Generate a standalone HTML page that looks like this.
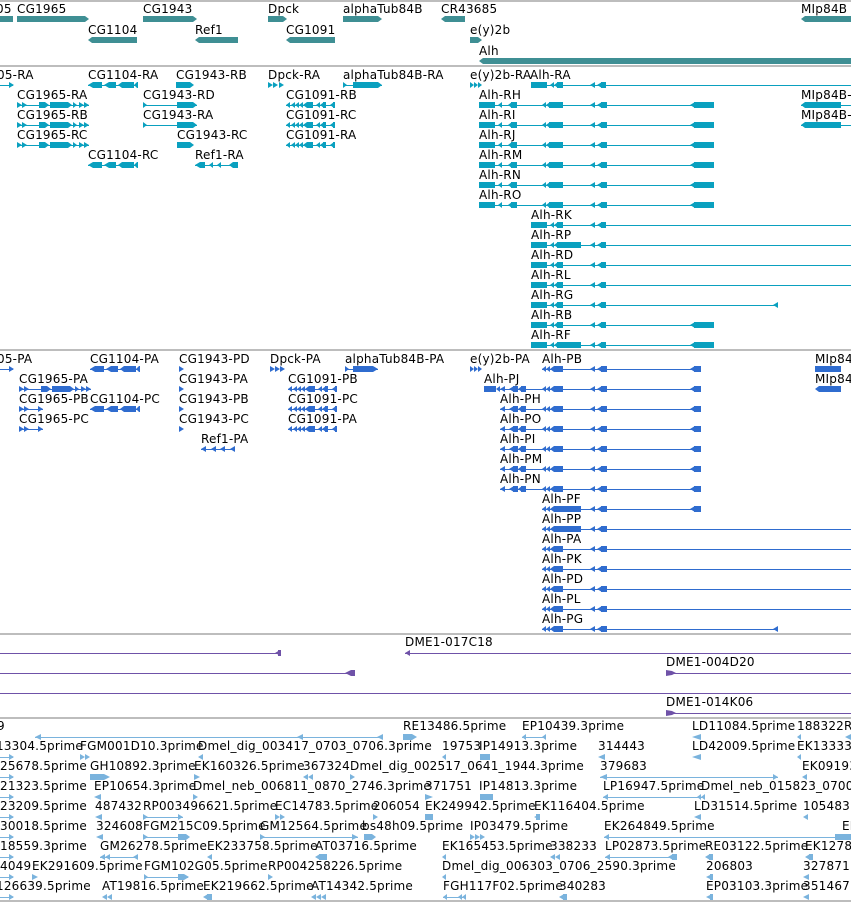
<!DOCTYPE html>
<html><head><meta charset="utf-8">
<style>
html,body{margin:0;padding:0;background:#fff;}
svg{display:block;}
text{font-family:"DejaVu Sans","Liberation Sans",sans-serif;font-size:12px;fill:#000;letter-spacing:0.2px;}
</style></head>
<body>
<svg width="851" height="902" viewBox="0 0 851 902" xmlns="http://www.w3.org/2000/svg">
<defs>
 <g id="rh"><rect x="0" y="0" width="235" height="1"/>
  <rect x="0" y="-3" width="16" height="6"/><polygon points="19,0 23,-3 23,3"/><polygon points="29,0 33,-3 33,3"/><rect x="32" y="-3" width="6" height="6"/>
  <polygon points="63,0 67,-3 67,3"/><polygon points="67,0 71,-3 71,3"/><rect x="70" y="-3" width="14" height="6"/>
  <polygon points="111,0 116,-3 116,3"/><polygon points="118,0 123,-3 123,3"/><rect x="122" y="-3" width="6" height="6"/>
  <polygon points="211,0 216,-3 216,3"/><rect x="215" y="-3" width="20" height="6"/></g>
 <g id="rkb"><rect x="0" y="-3" width="16" height="6"/><polygon points="19,0 23,-3 23,3"/><polygon points="23,0 27,-3 27,3"/><rect x="26" y="-3" width="6" height="6"/>
  <polygon points="59,0 64,-3 64,3"/><polygon points="66,0 71,-3 71,3"/><rect x="70" y="-3" width="5" height="6"/></g>
 <g id="rk"><rect x="0" y="0" width="320" height="1"/><use href="#rkb"/></g>
 <g id="rp"><use href="#rk"/><rect x="26" y="-3" width="24" height="6"/></g>
 <g id="rg"><rect x="0" y="0" width="247" height="1"/><use href="#rkb"/><polygon points="242,0 247,-3 247,3"/></g>
 <g id="rb"><rect x="0" y="0" width="183" height="1"/><use href="#rkb"/><polygon points="159,0 164,-3 164,3"/><rect x="163" y="-3" width="20" height="6"/></g>
 <g id="rf"><use href="#rb"/><rect x="26" y="-3" width="24" height="6"/></g>
 <g id="pbb"><polygon points="0,0 4,-3 4,3"/><polygon points="4,0 8,-3 8,3"/><polygon points="8,0 12,-3 12,3"/><rect x="12" y="-3" width="9" height="6"/>
  <polygon points="48,0 53,-3 53,3"/><polygon points="55,0 60,-3 60,3"/><rect x="59" y="-3" width="6" height="6"/></g>
 <g id="pb"><rect x="0" y="0" width="159" height="1"/><use href="#pbb"/><polygon points="148,0 153,-3 153,3"/><rect x="152" y="-3" width="7" height="6"/></g>
 <g id="ph"><use href="#pb" x="42"/><rect x="0" y="0" width="42" height="1"/><polygon points="0,0 5,-3 5,3"/><polygon points="9,0 14,-3 14,3"/><rect x="13" y="-3" width="5" height="6"/><polygon points="18,0 22,-3 22,3"/><rect x="21" y="-3" width="5" height="6"/></g>
 <g id="pj"><use href="#ph" x="16"/><rect x="0" y="-3" width="12" height="6"/><polygon points="12,0 16,-3 16,3"/></g>
 <g id="pf"><use href="#pb"/><rect x="12" y="-3" width="27" height="6"/></g>
 <g id="pa"><rect x="0" y="0" width="309" height="1"/><use href="#pbb"/></g>
 <g id="pp"><use href="#pa"/><rect x="12" y="-3" width="27" height="6"/></g>
 <g id="pg"><rect x="0" y="0" width="236" height="1"/><use href="#pbb"/><polygon points="231,0 236,-3 236,3"/></g>
 <g id="c1965"><rect x="0" y="0" width="72" height="1"/><polygon points="0,-3 5,0 0,3"/><polygon points="5,-3 10,0 5,3"/><rect x="22" y="-3" width="6" height="6"/><polygon points="28,-3 32,0 28,3"/><rect x="33" y="-3" width="18" height="6"/><polygon points="51,-3 55,0 51,3"/><polygon points="56,-3 60,0 56,3"/><polygon points="62,-3 67,0 62,3"/><polygon points="67,-3 72,0 67,3"/></g>
 <g id="c1091"><rect x="0" y="0" width="49" height="1"/><polygon points="0,0 4,-3 4,3"/><polygon points="5,0 9,-3 9,3"/><polygon points="9,0 13,-3 13,3"/><polygon points="13,0 17,-3 17,3"/><polygon points="17,0 21,-3 21,3"/><rect x="21" y="-3" width="6" height="6"/><polygon points="30,0 34,-3 34,3"/><polygon points="34,0 38,-3 38,3"/><rect x="37" y="-3" width="3" height="6"/><polygon points="44,0 48,-3 48,3"/><rect x="47" y="-3" width="2" height="6"/></g>
 <g id="c1104"><rect x="0" y="0" width="50" height="1"/><polygon points="0,0 5,-3 5,3"/><rect x="5" y="-3" width="9" height="6"/><polygon points="16,0 21,-3 21,3"/><rect x="21" y="-3" width="7" height="6"/><polygon points="30,0 34,-3 34,3"/><rect x="34" y="-3" width="12" height="6"/><polygon points="46,0 49,-3 49,3"/><rect x="49" y="-3" width="1" height="6"/></g>
</defs>

<g fill="#bdbdbd">
<rect x="0" y="0" width="851" height="2"/>
<rect x="0" y="65" width="851" height="2"/>
<rect x="0" y="349" width="851" height="2"/>
<rect x="0" y="633" width="851" height="2"/>
<rect x="0" y="717" width="851" height="2"/>
<rect x="0" y="900" width="851" height="2"/>
</g>

<g fill="#3f8f94">
<rect x="0" y="16" width="13" height="6"/>
<polygon points="17,16 85,16 89,19 85,22 17,22"/>
<polygon points="143,16 193,16 197,19 193,22 143,22"/>
<polygon points="268,16 283,16 287,19 283,22 268,22"/>
<polygon points="343,16 378,16 382,19 378,22 343,22"/>
<polygon points="441,19 445,16 465,16 465,22 445,22"/>
<polygon points="801,19 805,16 851,16 851,22 805,22"/>
<polygon points="88,40 92,37 137,37 137,43 92,43"/>
<polygon points="195,40 199,37 238,37 238,43 199,43"/>
<polygon points="286,40 290,37 335,37 335,43 290,43"/>
<polygon points="470,37 478,37 482,40 478,43 470,43"/>
<polygon points="479,61 483,58 851,58 851,64 483,64"/>
</g>
<text x="-4" y="13">05</text><text x="17" y="13">CG1965</text><text x="143" y="13">CG1943</text><text x="268" y="13">Dpck</text><text x="343" y="13">alphaTub84B</text><text x="441" y="13">CR43685</text><text x="801" y="13">MIp84B</text>
<text x="88" y="34">CG1104</text><text x="195" y="34">Ref1</text><text x="286" y="34">CG1091</text><text x="470" y="34">e(y)2b</text>
<text x="479" y="55">Alh</text>

<g fill="#0aa0bf">
<rect x="0" y="85" width="13" height="1"/><polygon points="9,82 14,85 9,88"/>
<use href="#c1104" x="88" y="85"/>
<rect x="176" y="82" width="14" height="6"/><polygon points="190,82 194,85 190,88"/>
<polygon points="268,82 273,85 268,88"/><polygon points="273,82 278,85 273,88"/><polygon points="279,82 284,85 279,88"/>
<rect x="343" y="85" width="39" height="1"/><polygon points="343,82 347,85 343,88"/><rect x="353" y="82" width="25" height="6"/><polygon points="378,82 382,85 378,88"/>
<polygon points="470,82 474,85 470,88"/><polygon points="474,82 478,85 474,88"/><polygon points="478,82 482,85 478,88"/>
<use href="#rk" x="531" y="85"/>
<use href="#c1965" x="17" y="105"/><use href="#c1965" x="17" y="125"/><use href="#c1965" x="17" y="145"/>
<rect x="143" y="105" width="54" height="1"/><polygon points="143,102 147,105 143,108"/><rect x="177" y="102" width="16" height="6"/><polygon points="193,102 197,105 193,108"/>
<rect x="143" y="125" width="54" height="1"/><polygon points="143,122 147,125 143,128"/><rect x="177" y="122" width="16" height="6"/><polygon points="193,122 197,125 193,128"/>
<rect x="177" y="142" width="13" height="6"/><polygon points="190,142 194,145 190,148"/>
<use href="#c1091" x="286" y="105"/><use href="#c1091" x="286" y="125"/><use href="#c1091" x="286" y="145"/>
<use href="#c1104" x="88" y="165"/>
<rect x="195" y="165" width="43" height="1"/><polygon points="195,165 200,162 200,168"/><rect x="200" y="162" width="5" height="6"/><polygon points="209,165 213,162 213,168"/><polygon points="217,165 221,162 221,168"/><polygon points="229,165 233,162 233,168"/><rect x="233" y="162" width="5" height="6"/>
<use href="#rh" x="479" y="105"/><use href="#rh" x="479" y="125"/><use href="#rh" x="479" y="145"/><use href="#rh" x="479" y="165"/><use href="#rh" x="479" y="185"/><use href="#rh" x="479" y="205"/>
<rect x="801" y="105" width="50" height="1"/><polygon points="801,105 805,102 805,108"/><rect x="805" y="102" width="36" height="6"/>
<rect x="801" y="125" width="50" height="1"/><polygon points="801,125 805,122 805,128"/><rect x="805" y="122" width="36" height="6"/>
<use href="#rk" x="531" y="225"/><use href="#rp" x="531" y="245"/><use href="#rk" x="531" y="265"/><use href="#rk" x="531" y="285"/><use href="#rg" x="531" y="305"/><use href="#rb" x="531" y="325"/><use href="#rf" x="531" y="345"/>
</g>
<text x="-3" y="79">05-RA</text><text x="88" y="79">CG1104-RA</text><text x="176" y="79">CG1943-RB</text><text x="268" y="79">Dpck-RA</text><text x="343" y="79">alphaTub84B-RA</text><text x="470" y="79">e(y)2b-RA</text><text x="530" y="79">Alh-RA</text>
<text x="17" y="99">CG1965-RA</text><text x="143" y="99">CG1943-RD</text><text x="286" y="99">CG1091-RB</text><text x="479" y="99">Alh-RH</text><text x="801" y="99">MIp84B-</text>
<text x="17" y="119">CG1965-RB</text><text x="143" y="119">CG1943-RA</text><text x="286" y="119">CG1091-RC</text><text x="479" y="119">Alh-RI</text><text x="801" y="119">MIp84B-</text>
<text x="17" y="139">CG1965-RC</text><text x="177" y="139">CG1943-RC</text><text x="286" y="139">CG1091-RA</text><text x="479" y="139">Alh-RJ</text>
<text x="88" y="159">CG1104-RC</text><text x="195" y="159">Ref1-RA</text><text x="479" y="159">Alh-RM</text>
<text x="479" y="179">Alh-RN</text><text x="479" y="199">Alh-RO</text>
<text x="531" y="219">Alh-RK</text><text x="531" y="239">Alh-RP</text><text x="531" y="259">Alh-RD</text><text x="531" y="279">Alh-RL</text><text x="531" y="299">Alh-RG</text><text x="531" y="319">Alh-RB</text><text x="531" y="339">Alh-RF</text>

<g fill="#2f6ccf">
<rect x="0" y="369" width="13" height="1"/><polygon points="9,366 14,369 9,372"/>
<use href="#c1104" x="90" y="369"/><use href="#c1104" x="90" y="409"/>
<polygon points="179,366 184,369 179,372"/><polygon points="179,386 184,389 179,392"/><polygon points="179,406 184,409 179,412"/><polygon points="179,426 184,429 179,432"/>
<polygon points="270,366 275,369 270,372"/><polygon points="275,366 280,369 275,372"/><polygon points="280,366 285,369 280,372"/>
<rect x="345" y="369" width="33" height="1"/><polygon points="345,366 349,369 345,372"/><rect x="353" y="366" width="20" height="6"/><polygon points="373,366 378,369 373,372"/>
<polygon points="470,366 474,369 470,372"/><polygon points="474,366 478,369 474,372"/><polygon points="478,366 482,369 478,372"/>
<use href="#c1965" x="19" y="389"/>
<rect x="19" y="409" width="24" height="1"/><polygon points="19,406 24,409 19,412"/><polygon points="24,406 29,409 24,412"/><polygon points="38,406 43,409 38,412"/>
<rect x="19" y="429" width="24" height="1"/><polygon points="19,426 24,429 19,432"/><polygon points="24,426 29,429 24,432"/><polygon points="38,426 43,429 38,432"/>
<use href="#c1091" x="288" y="389"/><use href="#c1091" x="288" y="409"/><use href="#c1091" x="288" y="429"/>
<rect x="201" y="449" width="34" height="1"/><polygon points="201,449 206,446 206,452"/><polygon points="211,449 216,446 216,452"/><polygon points="220,449 225,446 225,452"/><polygon points="230,449 235,446 235,452"/>
<use href="#pb" x="542" y="369"/><use href="#pj" x="484" y="389"/>
<use href="#ph" x="500" y="409"/><use href="#ph" x="500" y="429"/><use href="#ph" x="500" y="449"/><use href="#ph" x="500" y="469"/><use href="#ph" x="500" y="489"/>
<use href="#pf" x="542" y="509"/><use href="#pp" x="542" y="529"/><use href="#pa" x="542" y="549"/><use href="#pa" x="542" y="569"/><use href="#pa" x="542" y="589"/><use href="#pa" x="542" y="609"/><use href="#pg" x="542" y="629"/>
<rect x="815" y="366" width="26" height="6"/>
<polygon points="815,389 819,386 841,386 841,392 819,392"/>
</g>
<text x="-3" y="363">05-PA</text><text x="90" y="363">CG1104-PA</text><text x="179" y="363">CG1943-PD</text><text x="270" y="363">Dpck-PA</text><text x="345" y="363">alphaTub84B-PA</text><text x="470" y="363">e(y)2b-PA</text><text x="542" y="363">Alh-PB</text><text x="815" y="363">MIp84</text>
<text x="19" y="383">CG1965-PA</text><text x="179" y="383">CG1943-PA</text><text x="288" y="383">CG1091-PB</text><text x="484" y="383">Alh-PJ</text><text x="815" y="383">MIp84</text>
<text x="19" y="403">CG1965-PB</text><text x="90" y="403">CG1104-PC</text><text x="179" y="403">CG1943-PB</text><text x="288" y="403">CG1091-PC</text><text x="500" y="403">Alh-PH</text>
<text x="19" y="423">CG1965-PC</text><text x="179" y="423">CG1943-PC</text><text x="288" y="423">CG1091-PA</text><text x="500" y="423">Alh-PO</text>
<text x="201" y="443">Ref1-PA</text><text x="500" y="443">Alh-PI</text>
<text x="500" y="463">Alh-PM</text><text x="500" y="483">Alh-PN</text>
<text x="542" y="503">Alh-PF</text><text x="542" y="523">Alh-PP</text><text x="542" y="543">Alh-PA</text><text x="542" y="563">Alh-PK</text><text x="542" y="583">Alh-PD</text><text x="542" y="603">Alh-PL</text><text x="542" y="623">Alh-PG</text>

<g fill="#6f52a8">
<rect x="0" y="653" width="281" height="1"/><polygon points="275,653 280,650 281,656"/><rect x="278" y="650" width="3" height="6"/>
<rect x="405" y="653" width="446" height="1"/><polygon points="405,653 410,650 410,656"/>
<rect x="0" y="673" width="355" height="1"/><polygon points="345,673 351,670 355,670 355,676 351,676"/>
<rect x="666" y="673" width="185" height="1"/><polygon points="666,670 672,671 676,673 672,675 666,676"/>
<rect x="0" y="693" width="851" height="1"/>
<rect x="666" y="713" width="185" height="1"/><polygon points="666,710 672,711 676,713 672,715 666,716"/>
</g>
<text x="405" y="646">DME1-017C18</text>
<text x="666" y="666">DME1-004D20</text>
<text x="666" y="706">DME1-014K06</text>

<g fill="#7ab3dd">
<rect x="35" y="737" width="348" height="1"/><polygon points="35,737 41,734 41,740"/><polygon points="297,737 303,734 303,740"/><polygon points="377,737 383,734 383,740"/>
<rect x="403" y="734" width="9" height="6"/><polygon points="412,734 417,737 412,740"/>
<rect x="522" y="737" width="24" height="1"/><polygon points="522,737 526,734 526,740"/><polygon points="542,737 546,734 546,740"/>
<polygon points="692,737 701,734 701,740"/><polygon points="797,737 801,734 801,740"/><polygon points="845,737 851,734 851,740"/>
<g id="estcol"><rect x="0" y="757" width="13" height="1"/><polygon points="9,754 14,757 9,760"/></g>
<use href="#estcol" y="20"/><use href="#estcol" y="40"/><use href="#estcol" y="60"/><use href="#estcol" y="80"/><use href="#estcol" y="100"/><use href="#estcol" y="120"/><use href="#estcol" y="140"/>
<polygon points="80,754 85,757 80,760"/><polygon points="85,754 90,757 85,760"/>
<polygon points="198,757 203,754 203,760"/><polygon points="442,757 446,754 446,760"/><rect x="480" y="754" width="10" height="6"/><polygon points="480,757 484,754 484,760"/><polygon points="598,757 605,754 605,760"/><polygon points="692,757 701,754 701,760"/><polygon points="797,757 801,754 801,760"/>
<rect x="90" y="774" width="14" height="6"/><polygon points="90,777 95,774 95,780"/><polygon points="104,774 110,777 104,780"/><polygon points="194,774 200,777 194,780"/><polygon points="303,777 308,774 308,780"/><polygon points="308,777 313,774 313,780"/><polygon points="350,774 355,777 350,780"/>
<rect x="600" y="777" width="178" height="1"/><polygon points="600,777 607,774 607,780"/><polygon points="773,774 778,777 773,780"/><polygon points="802,777 807,774 807,780"/>
<polygon points="94,797 101,794 101,800"/><polygon points="193,794 198,797 193,800"/><polygon points="425,794 433,797 425,800"/><rect x="480" y="794" width="13" height="6"/><polygon points="480,797 484,794 484,800"/>
<rect x="603" y="797" width="101" height="1"/><polygon points="603,797 608,794 608,800"/><polygon points="697,797 701,794 701,800"/><polygon points="701,797 705,794 705,800"/>
<polygon points="95,817 102,814 102,820"/><rect x="143" y="817" width="40" height="1"/><polygon points="143,814 148,817 143,820"/><polygon points="178,814 183,817 178,820"/><polygon points="275,814 280,817 275,820"/><polygon points="280,814 285,817 280,820"/><polygon points="373,814 378,817 373,820"/><rect x="425" y="814" width="8" height="6"/><polygon points="534,817 540,814 540,820"/><rect x="536" y="814" width="4" height="6"/><polygon points="694,817 701,814 701,820"/><polygon points="803,817 808,814 808,820"/>
<polygon points="96,837 103,834 103,840"/><rect x="143" y="837" width="43" height="1"/><polygon points="143,834 148,837 143,840"/><rect x="178" y="834" width="8" height="6"/><polygon points="186,834 190,837 186,840"/><rect x="260" y="837" width="98" height="1"/><polygon points="260,834 265,837 260,840"/><polygon points="352,834 358,837 352,840"/><rect x="364" y="834" width="8" height="6"/><polygon points="372,834 376,837 372,840"/><polygon points="470,834 475,837 470,840"/><polygon points="475,834 480,837 475,840"/><polygon points="480,834 485,837 480,840"/>
<rect x="604" y="837" width="247" height="1"/><polygon points="604,837 609,834 609,840"/><rect x="835" y="834" width="16" height="6"/>
<rect x="100" y="857" width="38" height="1"/><polygon points="100,857 105,854 105,860"/><polygon points="105,857 110,854 110,860"/><polygon points="133,857 138,854 138,860"/><polygon points="207,857 212,854 212,860"/><polygon points="315,857 320,854 320,860"/><rect x="319" y="854" width="8" height="6"/><polygon points="442,857 446,854 446,860"/><polygon points="550,857 555,854 555,860"/><polygon points="555,857 560,854 560,860"/>
<rect x="605" y="857" width="72" height="1"/><polygon points="605,857 610,854 610,860"/><polygon points="668,857 673,854 673,860"/><rect x="672" y="854" width="5" height="6"/><polygon points="705,857 710,854 710,860"/><rect x="709" y="854" width="4" height="6"/><polygon points="805,857 810,854 810,860"/><rect x="809" y="854" width="4" height="6"/>
<polygon points="32,874 38,877 32,880"/><rect x="144" y="877" width="44" height="1"/><polygon points="144,874 148,877 144,880"/><rect x="178" y="874" width="6" height="6"/><polygon points="184,874 189,877 184,880"/><polygon points="268,874 273,877 268,880"/><polygon points="442,877 446,874 446,880"/><polygon points="706,877 712,874 712,880"/><rect x="710" y="874" width="3" height="6"/><polygon points="803,877 809,874 809,880"/>
<polygon points="102,897 107,894 107,900"/><polygon points="107,897 112,894 112,900"/><polygon points="203,897 208,894 208,900"/><rect x="207" y="894" width="5" height="6"/><polygon points="311,897 316,894 316,900"/><polygon points="316,897 321,894 321,900"/><polygon points="321,897 326,894 326,900"/>
<rect x="443" y="897" width="20" height="1"/><polygon points="443,897 447,894 447,900"/><polygon points="458,897 462,894 462,900"/><polygon points="462,897 466,894 466,900"/><polygon points="559,897 564,894 564,900"/><rect x="563" y="894" width="4" height="6"/><polygon points="706,897 712,894 712,900"/><rect x="710" y="894" width="3" height="6"/><polygon points="803,897 809,894 809,900"/>
</g>
<text x="-3" y="730">9</text><text x="403" y="730">RE13486.5prime</text><text x="522" y="730">EP10439.3prime</text><text x="692" y="730">LD11084.5prime</text><text x="797" y="730">188322R</text>
<text x="-4" y="750">13304.5prime</text><text x="80" y="750">FGM001D10.3prime</text><text x="198" y="750">Dmel_dig_003417_0703_0706.3prime</text><text x="442" y="750">19753</text><text x="479" y="750">IP14913.3prime</text><text x="598" y="750">314443</text><text x="692" y="750">LD42009.5prime</text><text x="797" y="750">EK13333</text>
<text x="0" y="770">25678.5prime</text><text x="90" y="770">GH10892.3prime</text><text x="194" y="770">EK160326.5prime</text><text x="303" y="770">367324</text><text x="350" y="770">Dmel_dig_002517_0641_1944.3prime</text><text x="600" y="770">379683</text><text x="802" y="770">EK09193</text>
<text x="0" y="790">21323.5prime</text><text x="94" y="790">EP10654.3prime</text><text x="193" y="790">Dmel_neb_006811_0870_2746.3prime</text><text x="425" y="790">371751</text><text x="479" y="790">IP14813.3prime</text><text x="603" y="790">LP16947.5prime</text><text x="701" y="790">Dmel_neb_015823_0700</text>
<text x="0" y="810">23209.5prime</text><text x="95" y="810">487432</text><text x="143" y="810">RP003496621.5prime</text><text x="275" y="810">EC14783.5prime</text><text x="373" y="810">206054</text><text x="425" y="810">EK249942.5prime</text><text x="534" y="810">EK116404.5prime</text><text x="694" y="810">LD31514.5prime</text><text x="803" y="810">105483</text>
<text x="0" y="830">30018.5prime</text><text x="96" y="830">324608</text><text x="143" y="830">FGM215C09.5prime</text><text x="260" y="830">GM12564.5prime</text><text x="362" y="830">bs48h09.5prime</text><text x="470" y="830">IP03479.5prime</text><text x="604" y="830">EK264849.5prime</text><text x="842" y="830">EK</text>
<text x="0" y="850">18559.3prime</text><text x="100" y="850">GM26278.5prime</text><text x="207" y="850">EK233758.5prime</text><text x="315" y="850">AT03716.5prime</text><text x="442" y="850">EK165453.5prime</text><text x="550" y="850">338233</text><text x="605" y="850">LP02873.5prime</text><text x="705" y="850">RE03122.5prime</text><text x="805" y="850">EK1278</text>
<text x="0" y="870">4049</text><text x="32" y="870">EK291609.5prime</text><text x="144" y="870">FGM102G05.5prime</text><text x="268" y="870">RP004258226.5prime</text><text x="442" y="870">Dmel_dig_006303_0706_2590.3prime</text><text x="706" y="870">206803</text><text x="803" y="870">327871</text>
<text x="-4" y="890">126639.5prime</text><text x="102" y="890">AT19816.5prime</text><text x="203" y="890">EK219662.5prime</text><text x="311" y="890">AT14342.5prime</text><text x="443" y="890">FGH117F02.5prime</text><text x="559" y="890">340283</text><text x="706" y="890">EP03103.3prime</text><text x="803" y="890">351467</text>
</svg>
</body></html>
